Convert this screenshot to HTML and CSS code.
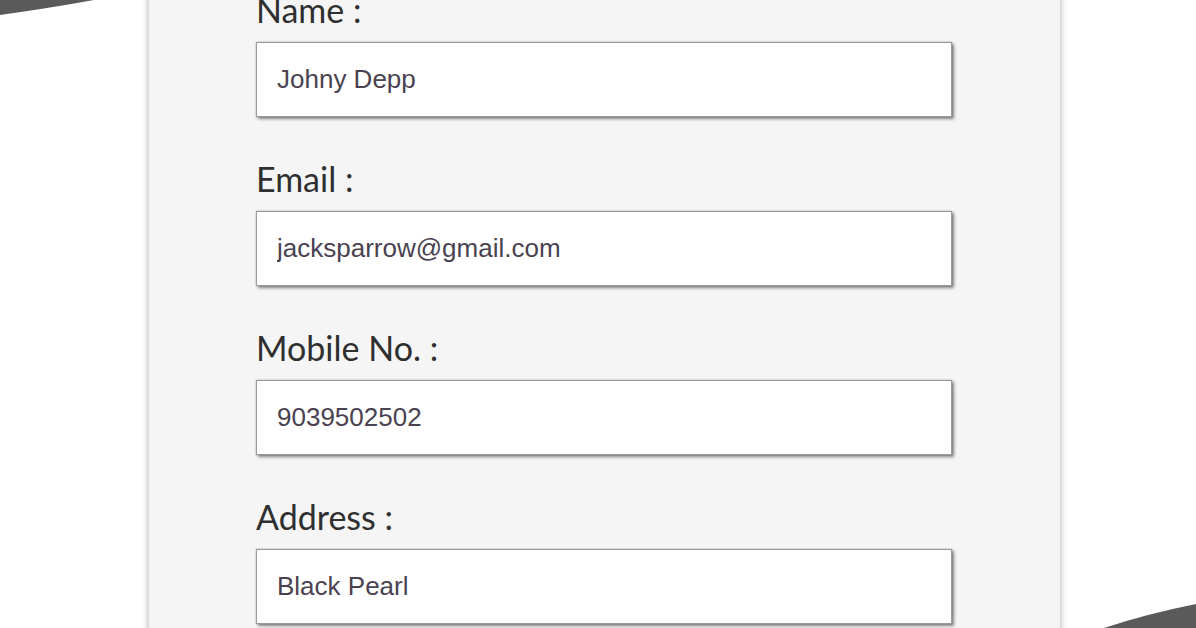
FILE: index.html
```html
<!DOCTYPE html>
<html lang="en">
<head>
<meta charset="utf-8">
<title>Form</title>
<link rel="stylesheet" href="styles.css">
</head>
<body>
<svg class="swoosh swoosh-tl" width="100" height="20" viewBox="0 0 100 20"><path d="M0 0 H94 Q50 8 0 15 Z" fill="#5a5a5a"/></svg>
<svg class="swoosh swoosh-br" width="100" height="30" viewBox="0 0 100 30"><path d="M8 30 Q50 16 100 6 V30 Z" fill="#5a5a5a"/></svg>
<main class="card">
  <form class="form">
    <div class="field">
      <label class="label" for="name">Name :</label>
      <input class="input" id="name" type="text" value="Johny Depp">
    </div>
    <div class="field">
      <label class="label" for="email">Email :</label>
      <input class="input" id="email" type="text" value="jacksparrow@gmail.com">
    </div>
    <div class="field">
      <label class="label" for="mobile">Mobile No. :</label>
      <input class="input" id="mobile" type="text" value="9039502502">
    </div>
    <div class="field">
      <label class="label" for="address">Address :</label>
      <input class="input" id="address" type="text" value="Black Pearl">
    </div>
  </form>
</main>
</body>
</html>
```
FILE: styles.css
```css
html, body {
  margin: 0;
  padding: 0;
  background: #ffffff;
  height: 628px;
  overflow: hidden;
}
body {
  position: relative;
  font-family: "Liberation Sans", Arial, sans-serif;
}
.swoosh {
  position: absolute;
  display: block;
}
.swoosh-tl { left: 0; top: 0; }
.swoosh-br { right: 0; bottom: 0; }
.card {
  width: 911px;
  margin: -10px 0 0 149px;
  background: #f5f5f5;
  box-shadow: 0 0 7px rgba(0, 0, 0, 0.35);
  padding: 0 0 40px 107px;
  box-sizing: border-box;
}
.form {
  display: flex;
  flex-direction: column;
}
.field {
  display: flex;
  flex-direction: column;
  margin-bottom: 42px;
}
.label {
  font-family: Lato, "Open Sans", sans-serif;
  font-size: 34px;
  line-height: 40px;
  color: #2f2f2f;
  margin-bottom: 12px;
}
.input {
  width: 696px;
  height: 75px;
  box-sizing: border-box;
  border: 1px solid #9a9a9a;
  box-shadow: 2px 2px 3px rgba(0, 0, 0, 0.45), 0 0 2px rgba(0, 0, 0, 0.25);
  background: #ffffff;
  padding: 0 0 0 20px;
  font-family: "Liberation Sans", Arial, sans-serif;
  font-size: 26px;
  color: #4a4250;
  outline: none;
}
```
